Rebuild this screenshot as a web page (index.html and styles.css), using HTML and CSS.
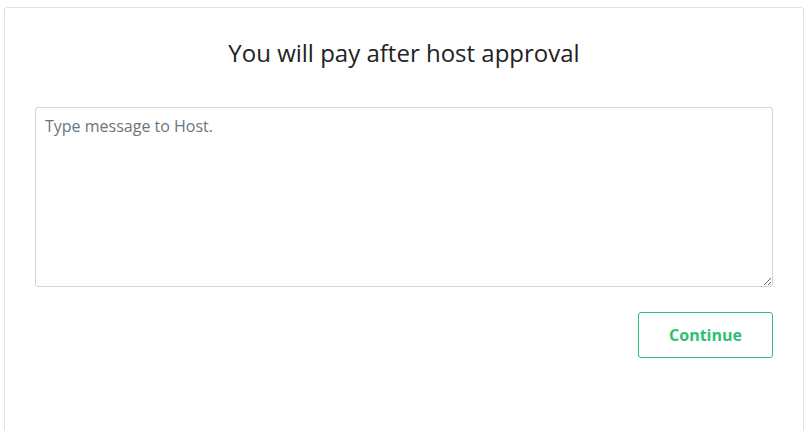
FILE: index.html
```html
<!DOCTYPE html>
<html>
<head>
<meta charset="utf-8">
<link rel="stylesheet" href="styles.css">
</head>
<body>
<div class="card">
  <h2 class="title">You will pay after host approval</h2>
  <textarea class="message" placeholder="Type message to Host."></textarea>
  <div class="actions">
    <button class="continue">Continue</button>
  </div>
</div>
</body>
</html>
```
FILE: styles.css
```css
html, body {
  margin: 0;
  padding: 0;
  background: #fff;
  font-family: "Open Sans", "Noto Sans", sans-serif;
  overflow: hidden;
}
.card {
  margin: 7px 0 0 4px;
  width: 800px;
  height: 440px;
  box-sizing: border-box;
  border: 1px solid #dee2e6;
  border-radius: 3px;
  padding: 0 30px;
}
.title {
  margin: 28px 0 0;
  font-weight: 400;
  font-size: 24px;
  line-height: 34px;
  color: #222;
  text-align: center;
}
.message {
  display: block;
  margin-top: 37px;
  width: 100%;
  height: 180px;
  box-sizing: border-box;
  border: 1px solid #ced4da;
  border-radius: 3px;
  padding: 6px 9px;
  font-family: "Open Sans", "Noto Sans", sans-serif;
  font-size: 16px;
  line-height: 24px;
  color: #333;
  resize: vertical;
  outline: none;
}
.message::placeholder {
  color: #6c757d;
}
.actions {
  display: flex;
  justify-content: flex-end;
  margin-top: 25px;
}
.continue {
  width: 135px;
  height: 46px;
  border: 1px solid #2ec06f;
  border-radius: 3px;
  background: #fff;
  color: #2ec06f;
  font-family: "Open Sans", "Noto Sans", sans-serif;
  font-weight: 700;
  font-size: 16px;
  cursor: pointer;
}
```
